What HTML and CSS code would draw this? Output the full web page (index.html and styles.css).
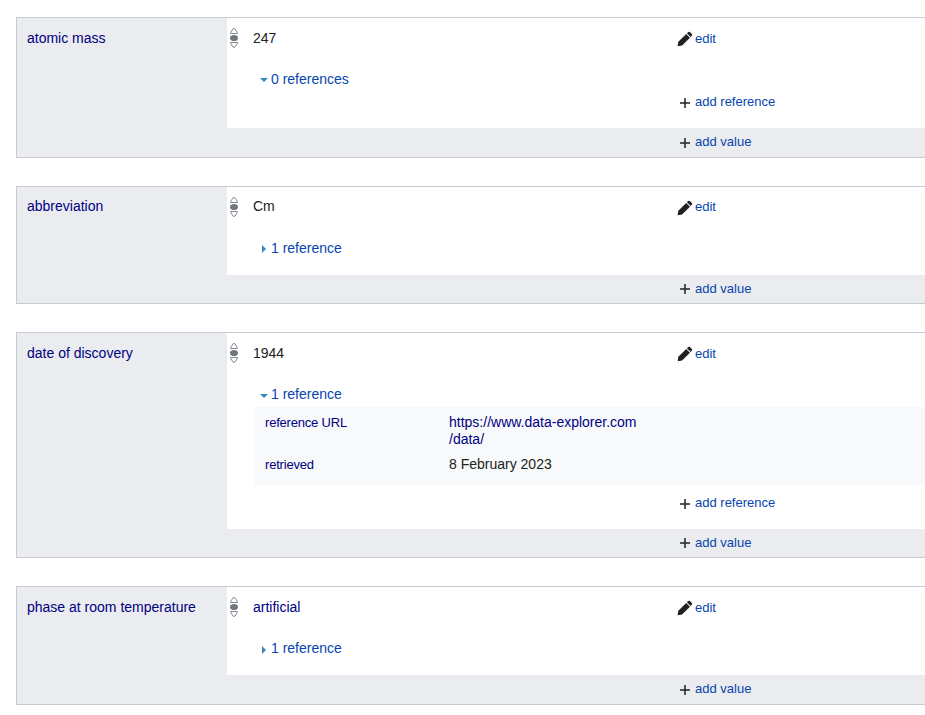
FILE: index.html
```
<!DOCTYPE html>
<html lang="en">
<head>
<meta charset="utf-8">
<title>Statements</title>
<link rel="stylesheet" href="styles.css">
</head>
<body>
<svg class="defs" width="0" height="0">
  <symbol id="rank" viewBox="0 0 8 20">
    <path d="M.6 5.5V4.6L3.2 .7Q4 .1 4.8 .7L7.4 4.6V5.5ZM.6 14.5V15.4L3.2 19.2Q4 19.9 4.8 19.2L7.4 15.4V14.5Z" fill="#fff" stroke="#72777d" stroke-width=".9"/>
    <ellipse cx="4" cy="10" rx="4" ry="3.1" fill="#72777d"/>
  </symbol>
  <symbol id="pencil" viewBox="0 0 16 16">
    <path d="M.6 15.3L1.3 10.8L9.2 2.9L13 6.7L5.1 14.6ZM9.9 2.3L11.3 1Q12.1.3 12.9 1L14.9 3Q15.6 3.8 14.9 4.6L13.6 6Z" fill="#202122"/>
  </symbol>
  <symbol id="plus" viewBox="0 0 10 10">
    <path d="M5 0V10M0 5H10" stroke="#202122" stroke-width="1.5"/>
  </symbol>
</svg>
<main class="list">
  <section class="statement mass">
    <div class="property"><a>atomic mass</a></div>
    <div class="claims">
      <div class="claim">
        <div class="value"><svg class="rank"><use href="#rank"/></svg><span class="snak">247</span><a class="action edit"><svg class="pencil"><use href="#pencil"/></svg>edit</a></div>
        <a class="toggle"><i class="open"></i>0 references</a>
        <a class="action add-ref"><svg class="plus"><use href="#plus"/></svg>add reference</a>
      </div>
      <div class="footer"><a class="action"><svg class="plus"><use href="#plus"/></svg>add value</a></div>
    </div>
  </section>
  <section class="statement abbreviation">
    <div class="property"><a>abbreviation</a></div>
    <div class="claims">
      <div class="claim">
        <div class="value"><svg class="rank"><use href="#rank"/></svg><span class="snak">Cm</span><a class="action edit"><svg class="pencil"><use href="#pencil"/></svg>edit</a></div>
        <a class="toggle"><i class="closed"></i>1 reference</a>
      </div>
      <div class="footer"><a class="action"><svg class="plus"><use href="#plus"/></svg>add value</a></div>
    </div>
  </section>
  <section class="statement discovery">
    <div class="property"><a>date of discovery</a></div>
    <div class="claims">
      <div class="claim">
        <div class="value"><svg class="rank"><use href="#rank"/></svg><span class="snak">1944</span><a class="action edit"><svg class="pencil"><use href="#pencil"/></svg>edit</a></div>
        <a class="toggle"><i class="open"></i>1 reference</a>
        <dl class="reference">
          <dt>reference URL</dt><dd><a>https://www.data-explorer.com<br>/data/</a></dd>
          <dt>retrieved</dt><dd>8 February 2023</dd>
        </dl>
        <a class="action add-ref"><svg class="plus"><use href="#plus"/></svg>add reference</a>
      </div>
      <div class="footer"><a class="action"><svg class="plus"><use href="#plus"/></svg>add value</a></div>
    </div>
  </section>
  <section class="statement phase">
    <div class="property"><a>phase at room temperature</a></div>
    <div class="claims">
      <div class="claim">
        <div class="value"><svg class="rank"><use href="#rank"/></svg><span class="snak"><a>artificial</a></span><a class="action edit"><svg class="pencil"><use href="#pencil"/></svg>edit</a></div>
        <a class="toggle"><i class="closed"></i>1 reference</a>
      </div>
      <div class="footer"><a class="action"><svg class="plus"><use href="#plus"/></svg>add value</a></div>
    </div>
  </section>
</main>
</body>
</html>
```
FILE: styles.css
```
* { box-sizing: border-box; }
body {
  margin: 0;
  background: #fff;
  color: #202122;
  font: 14px/17px "Liberation Sans", Arial, sans-serif;
  overflow: hidden;
}
.defs { display: none; }
a { color: #000080; }
.list {
  display: flex;
  flex-direction: column;
  gap: 28px;
  padding: 17px 0 0 16px;
}
.statement {
  display: grid;
  grid-template-columns: 210px 1fr;
  border: 1px solid #c8ccd1;
  border-right: 0;
  background: #eaecf0;
}
.mass { height: 141px; }
.abbreviation { height: 118px; }
.discovery { height: 226px; }
.phase { height: 119px; }
.property { padding: 12px 10px; }
.claims { display: flex; flex-direction: column; }
.claim {
  flex: 1;
  display: flex;
  flex-direction: column;
  background: #fff;
}
.value {
  display: flex;
  align-items: flex-start;
  height: 53px;
  padding: 12px 0 0 3px;
}
.rank { width: 8px; height: 20px; margin-top: -2px; }
.snak { width: 424px; margin-left: 15px; }
.abbreviation .property { padding-top: 11px; }
.abbreviation .value { padding-top: 11px; }
.abbreviation .rank { margin-top: -1px; }
.action {
  display: flex;
  align-items: center;
  height: 17px;
  color: #0645ad;
  font-size: 13px;
}
.pencil { width: 16px; height: 16px; margin: 1px 2px 0 0; }
.abbreviation .pencil { margin-top: 2px; }
.plus { width: 10px; height: 10px; margin: 2px 5px 0 0; }
.toggle {
  display: flex;
  align-items: center;
  height: 17px;
  padding-left: 33px;
  color: #0645ad;
}
.toggle i { width: 0; height: 0; border: 0 solid transparent; }
.toggle .open {
  margin: 1px 3px 0 0;
  border-width: 4px 4px 0;
  border-top-color: #3a87bd;
}
.discovery .open { margin-top: 2px; }
.toggle .closed {
  margin: 3px 5px 0 2px;
  border-width: 4px 0 4px 4px;
  border-left-color: #3a87bd;
}
.abbreviation .toggle .closed { margin-top: 1px; }
.add-ref { padding-left: 453px; margin-top: 5px; }
.footer {
  height: 29px;
  padding: 5px 0 0 453px;
}
.abbreviation .footer, .discovery .footer { height: 28px; }
.abbreviation .footer .plus, .discovery .footer .plus { margin-top: 0; }
.reference {
  display: grid;
  grid-template-columns: 184px 1fr;
  align-content: start;
  row-gap: 8px;
  height: 78px;
  margin: 4px 0 0 28px;
  padding: 7px 10px;
  background: #f8f9fa;
}
dt { color: #000080; font-size: 13px; letter-spacing: -.2px; }
dd { margin: 0; }
.discovery .add-ref { margin-top: 9px; }
```
